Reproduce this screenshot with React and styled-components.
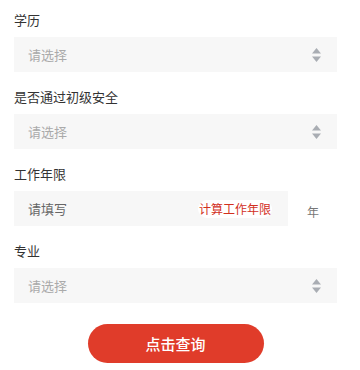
import React from "react";
import styled, { createGlobalStyle } from "styled-components";

const GlobalStyle = createGlobalStyle`
  body {
    margin: 0;
    background: #ffffff;
    font-family: "Noto Sans CJK SC", "Noto Sans", sans-serif;
  }
`;

const Form = styled.div`
  display: flex;
  flex-direction: column;
  padding: 8px 23px 8px 14px;
`;

const Field = styled.div`
  display: flex;
  flex-direction: column;
  margin-bottom: 13px;
`;

const Label = styled.div`
  font-size: 13px;
  line-height: 20px;
  color: #333333;
  padding: 2px 0 7px;
`;

const Select = styled.div`
  display: flex;
  align-items: center;
  justify-content: space-between;
  height: 35px;
  background: #f7f7f7;
  padding: 0 16px 0 14px;
`;

const Placeholder = styled.span`
  font-size: 13px;
  color: ${(p) => (p.$dark ? "#666666" : "#aaaaaa")};
`;

const InputRow = styled.div`
  display: flex;
  align-items: center;
`;

const Input = styled.div`
  flex: 0 0 274px;
  display: flex;
  align-items: center;
  justify-content: space-between;
  height: 35px;
  background: #f7f7f7;
  padding: 0 16px 0 14px;
  box-sizing: border-box;
`;

const Calc = styled.span`
  background: #ffffff;
  color: #d2301e;
  font-size: 12px;
  line-height: 18px;
  padding: 0 1px;
  border-radius: 9px;
`;

const Unit = styled.span`
  font-size: 12px;
  color: #777777;
  margin-left: 19px;
  padding-top: 6px;
`;

const Footer = styled.div`
  display: flex;
  justify-content: center;
  padding-top: 8px;
`;

const Button = styled.button`
  width: 176px;
  height: 39px;
  border: 0;
  border-radius: 20px;
  background: #e03c2a;
  color: #ffffff;
  font-family: inherit;
  font-size: 15px;
  font-weight: 500;
`;

const Arrows = () => (
  <svg width="9" height="16" viewBox="0 0 9 16">
    <path d="M4.5 1 L9 6.5 L0 6.5 Z" fill="#a9adb3" />
    <path d="M4.5 15 L9 9.5 L0 9.5 Z" fill="#a9adb3" />
  </svg>
);

const SelectField = ({ label }) => (
  <Field>
    <Label>{label}</Label>
    <Select>
      <Placeholder>请选择</Placeholder>
      <Arrows />
    </Select>
  </Field>
);

const App = () => (
  <>
    <GlobalStyle />
    <Form>
      <SelectField label="学历" />
      <SelectField label="是否通过初级安全" />
      <Field>
        <Label>工作年限</Label>
        <InputRow>
          <Input>
            <Placeholder $dark>请填写</Placeholder>
            <Calc>计算工作年限</Calc>
          </Input>
          <Unit>年</Unit>
        </InputRow>
      </Field>
      <SelectField label="专业" />
      <Footer>
        <Button>点击查询</Button>
      </Footer>
    </Form>
  </>
);

export default App;
